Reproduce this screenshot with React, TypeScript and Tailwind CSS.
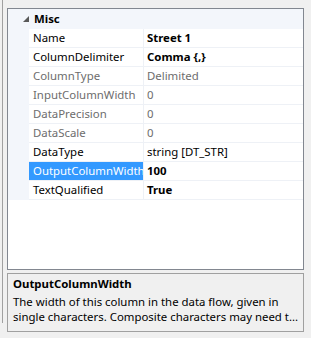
import React from "react";

type Prop = {
  name: string;
  value: string;
  bold?: boolean;
  disabled?: boolean;
  selected?: boolean;
};

const props: Prop[] = [
  { name: "Name", value: "Street 1", bold: true },
  { name: "ColumnDelimiter", value: "Comma {,}", bold: true },
  { name: "ColumnType", value: "Delimited", disabled: true },
  { name: "InputColumnWidth", value: "0", disabled: true },
  { name: "DataPrecision", value: "0", disabled: true },
  { name: "DataScale", value: "0", disabled: true },
  { name: "DataType", value: "string [DT_STR]" },
  { name: "OutputColumnWidth", value: "100", bold: true, selected: true },
  { name: "TextQualified", value: "True", bold: true },
];

function Row({ p }: { p: Prop }) {
  const textColor = p.disabled ? "text-[#6d6d6d]" : "text-black";
  return (
    <div className="flex h-[19px] bg-[#f3f6fb]">
      <div className="w-[21px] flex-none" />
      <div className="flex flex-1 border-b border-[#eef1f6]">
        <div
          className={
            p.selected
              ? "w-[114px] flex-none overflow-hidden whitespace-nowrap pl-[4px] leading-[18px] bg-[#3399ff] text-white"
              : `w-[114px] flex-none overflow-hidden whitespace-nowrap pl-[4px] leading-[18px] bg-white ${textColor}`
          }
        >
          {p.name}
        </div>
        <div className="w-px flex-none bg-[#eef1f6]" />
        <div
          className={`flex-1 overflow-hidden whitespace-nowrap pl-[3px] leading-[18px] bg-white ${textColor} ${
            p.bold ? "font-bold" : ""
          }`}
        >
          {p.value}
        </div>
      </div>
    </div>
  );
}

export default function App() {
  return (
    <div
      className="w-[311px] h-[338px] bg-[#f0f0f0] flex overflow-hidden text-[11.4px] text-black"
      style={{ fontFamily: '"Segoe UI", "Noto Sans", sans-serif' }}
    >
      <div className="ml-[2px] w-px h-[323px] bg-[#a0a0a0] flex-none" />
      <div className="ml-[4px] pt-[8px] w-[297px] flex flex-col">
        {/* property grid */}
        <div className="h-[262px] border border-[#828790] bg-white flex flex-col">
          <div className="flex items-center h-[20px] bg-[#f3f6fb]">
            <div className="w-[26px] flex-none flex justify-end pr-[5px]">
              <svg width="6" height="6" viewBox="0 0 6 6">
                <polygon points="6,0 6,6 0,6" fill="#595959" />
              </svg>
            </div>
            <span className="font-bold">Misc</span>
          </div>
          {props.map((p) => (
            <Row key={p.name} p={p} />
          ))}
        </div>
        {/* description pane */}
        <div className="mt-[3px] h-[59px] border border-[#a0a0a0] px-[5px] pt-[2px]">
          <div className="font-bold leading-[15px]">OutputColumnWidth</div>
          <div className="mt-[3px] leading-[15px] whitespace-nowrap">
            The width of this column in the data flow, given in
          </div>
          <div className="leading-[15px] whitespace-nowrap">
            single characters. Composite characters may need t...
          </div>
        </div>
      </div>
    </div>
  );
}
